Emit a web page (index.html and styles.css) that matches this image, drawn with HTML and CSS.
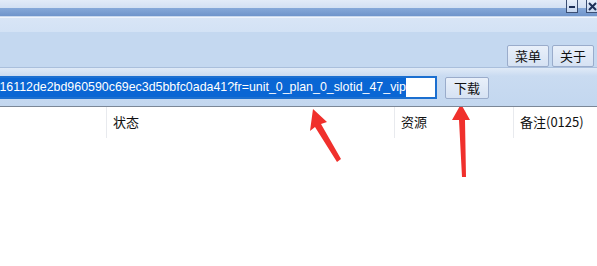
FILE: index.html
```html
<!DOCTYPE html>
<html>
<head>
<meta charset="utf-8">
<link rel="stylesheet" href="styles.css">
</head>
<body>
<div class="window">
  <div class="titlebar">
    <div class="title-top"></div>
    <div class="title-band"></div>
    <div class="winbtns">
      <div class="winbtn"><svg width="8" height="8" viewBox="0 0 8 8"><rect x="1" y="4" width="6" height="2" fill="#1d2f56"/></svg></div>
      <div class="winbtn"><svg width="9" height="9" viewBox="0 0 9 9"><path d="M1 1L8 8M8 1L1 8" stroke="#1d2f56" stroke-width="2"/></svg></div>
    </div>
  </div>
  <div class="menubar">
    <div class="menu-top"></div>
    <div class="menu-row">
      <button class="btn">菜单</button>
      <button class="btn">关于</button>
    </div>
  </div>
  <div class="toolbar">
    <div class="urlbox"><span class="sel">16112de2bd960590c69ec3d5bbfc0ada41?fr=unit_0_plan_0_slotid_47_vip</span></div>
    <button class="btn dl">下载</button>
  </div>
  <div class="list">
    <div class="header">
      <div class="col c1"></div>
      <div class="col c2">状态</div>
      <div class="col c3">资源</div>
      <div class="col c4">备注(0125)</div>
    </div>
    <svg class="arrows" width="597" height="160" viewBox="0 0 597 160">
      <polygon points="313,2 327,15 321,17 341,52 337,55 315,20 310,24" fill="#f0302c"/>
      <polygon points="461,-3 470,13 465,13 466,70 462,70 459,13 452,13" fill="#f0302c"/>
    </svg>
  </div>
</div>
</body>
</html>
```
FILE: styles.css
```css
* { box-sizing: border-box; }
html, body { margin: 0; padding: 0; }
body {
  width: 597px;
  height: 266px;
  overflow: hidden;
  background: #fff;
  font-family: "Liberation Sans", "Noto Sans CJK SC", sans-serif;
}
.window { display: flex; flex-direction: column; width: 597px; height: 266px; }
.titlebar { position: relative; height: 17px; }
.title-top { height: 8px; background: linear-gradient(#e2ebf8, #d2e0f3); }
.title-band { height: 9px; background: linear-gradient(#86a9d9, #6f95cb); border-bottom: 1px solid #c9d9ee; }
.winbtns { position: absolute; right: 0; top: 0; display: flex; gap: 8px; }
.winbtn {
  width: 12px; height: 13px;
  border: 1px solid #3b4f74;
  border-top: none;
  background: linear-gradient(#e8f0fb, #c5d6ef);
  display: flex; align-items: center; justify-content: center;
}
.winbtn:last-child { width: 11px; border-right: none; }
.menubar { height: 50px; background: #c4d8f0; display: flex; flex-direction: column; }
.menu-top { height: 15px; border-top: 1px solid #eef4fc; background: linear-gradient(#d8e5f6, #d3e2f5); }
.menu-row { flex: 1; display: flex; justify-content: flex-end; align-items: flex-end; gap: 3px; padding-right: 3px; }
.btn {
  font-family: "Noto Sans CJK SC", sans-serif;
  font-size: 13px;
  color: #111;
  height: 22px;
  padding: 0 7px;
  border: 1px solid #9aaccb;
  border-radius: 2px;
  background: linear-gradient(#e9f0fa, #d6e2f3);
  line-height: 20px;
  margin: 0;
}
.toolbar {
  height: 40px;
  display: flex;
  align-items: flex-start;
  padding-top: 8px;
  gap: 8px;
  background: linear-gradient(#e0eaf7 0, #c9dbf1 8px, #c3d7ef 100%);
  border-top: 1px solid #aabfdc;
  border-bottom: 1px solid #7b8797;
}
.urlbox {
  width: 437px;
  height: 23px;
  background: #fff;
  border: 2px solid #1b6fd0;
  border-left: none;
  display: flex;
  justify-content: flex-end;
  align-items: center;
  overflow: hidden;
  padding-right: 29px;
  white-space: nowrap;
}
.sel {
  flex: none;
  background: #0a66d4;
  color: #fff;
  font-size: 12.4px;
  line-height: 19px;
  font-family: "Liberation Sans", sans-serif;
}
.dl { height: 22px; margin-top: 1px; padding: 0 8px; }
.list { position: relative; flex: 1; background: #fff; }
.header { display: flex; height: 31px; }
.col {
  font-family: "Noto Sans CJK SC", sans-serif;
  font-size: 13px;
  color: #111;
  line-height: 30px;
  padding-left: 6px;
  border-left: 1px solid #e8eaee;
}
.c1 { width: 106px; border-left: none; }
.c2 { width: 288px; }
.c3 { width: 119px; }
.c4 { flex: 1; }
.arrows { position: absolute; left: 0; top: 0; }
```
